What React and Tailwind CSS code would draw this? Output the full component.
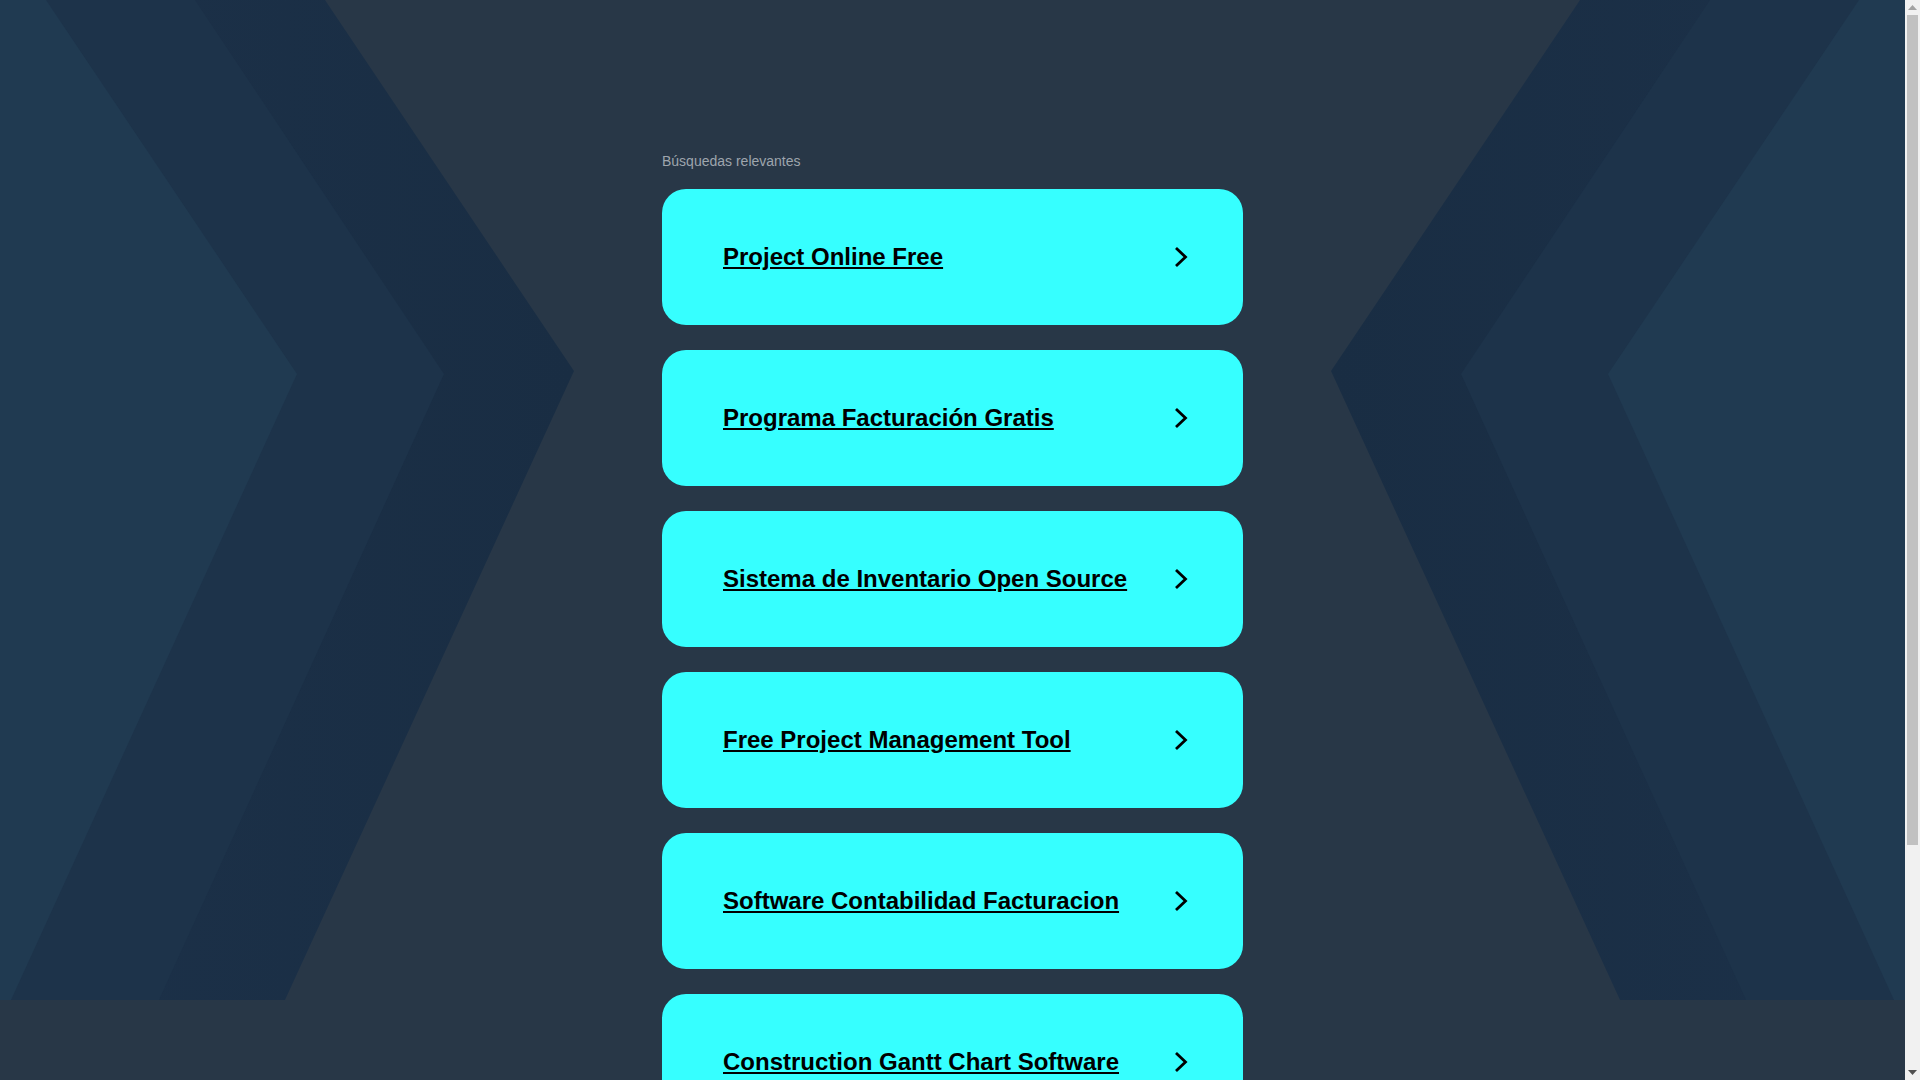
const searches = [
  "Project Online Free",
  "Programa Facturación Gratis",
  "Sistema de Inventario Open Source",
  "Free Project Management Tool",
  "Software Contabilidad Facturacion",
  "Construction Gantt Chart Software",
];

function Chevrons({ className, id }) {
  return (
    <svg
      className={className}
      width="600"
      height="1000"
      viewBox="0 0 600 1000"
      preserveAspectRatio="none"
    >
      <defs>
        <linearGradient id={id} x1="0" y1="0" x2="1" y2="0">
          <stop offset="0" stopColor="#1c3149" />
          <stop offset="1" stopColor="#192d43" />
        </linearGradient>
      </defs>
      <polygon points="0,0 325,0 574,371 285,1000 0,1000" fill={`url(#${id})`} />
      <polygon points="0,0 195,0 444,374 159,1000 0,1000" fill="#1d334a" />
      <polygon points="0,0 46,0 297,374 11,1000 0,1000" fill="#203a51" />
    </svg>
  );
}

function Arrow() {
  return (
    <svg width="14" height="22" viewBox="0 0 14 22" className="shrink-0">
      <path d="M2 2 L11.5 11 L2 20" fill="none" stroke="#000" strokeWidth="2.8" />
    </svg>
  );
}

function SearchCard({ label }) {
  return (
    <a
      href="#"
      className="flex items-center justify-between h-[136px] mb-[25px] pl-[61px] pr-[55px] rounded-3xl bg-[#36ffff]"
    >
      <span className="text-[24px] leading-7 font-bold text-black underline">
        {label}
      </span>
      <Arrow />
    </a>
  );
}

// classic window scrollbar, drawn since the headless page shows none
function Scrollbar() {
  return (
    <div className="w-[15px] shrink-0 h-full flex flex-col bg-[#f1f1f1]">
      <div className="h-[15px] flex items-center justify-center">
        <svg width="9" height="5" viewBox="0 0 9 5">
          <polygon points="0,5 4.5,0 9,5" fill="#a3a3a3" />
        </svg>
      </div>
      <div className="flex-1 px-[2px]">
        <div className="h-[830px] bg-[#c1c1c1]" />
      </div>
      <div className="h-[15px] flex items-center justify-center">
        <svg width="9" height="5" viewBox="0 0 9 5">
          <polygon points="0,0 9,0 4.5,5" fill="#505050" />
        </svg>
      </div>
    </div>
  );
}

export default function App() {
  return (
    <div
      className="h-screen flex overflow-hidden bg-[#283747]"
      style={{ fontFamily: '"Liberation Sans", Arial, sans-serif' }}
    >
      <div className="flex-1 h-full overflow-y-auto [scrollbar-width:none]">
        <div className="relative min-h-[1366px] overflow-hidden">
          {/* background shapes */}
          <div className="absolute top-0 left-0 w-full h-[1000px] pointer-events-none">
            <Chevrons id="fadeL" className="absolute top-0 left-0" />
            <Chevrons id="fadeR" className="absolute top-0 right-0 -scale-x-100" />
          </div>

          <div className="relative w-[581px] mx-auto pt-[153px] pb-[211px]">
            <p className="text-[14px] leading-4 text-[#9ea5ad] mb-5">
              Búsquedas relevantes
            </p>
            {searches.map((s) => (
              <SearchCard key={s} label={s} />
            ))}
          </div>
        </div>
      </div>
      <Scrollbar />
    </div>
  );
}
